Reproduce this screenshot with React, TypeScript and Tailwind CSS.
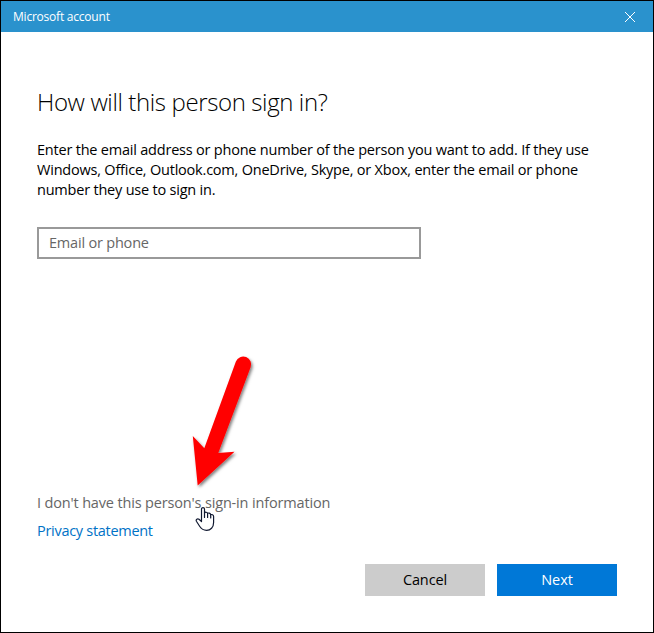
import { useState } from "react"

function CloseIcon() {
  return (
    <svg className="w-[10px] h-[10px]" viewBox="0 0 10 10" fill="none" stroke="white" strokeWidth="1">
      <path d="M0 0L10 10M10 0L0 10" />
    </svg>
  )
}

function RedArrow() {
  return (
    <svg
      className="absolute left-[179px] top-[344px] w-[90px] h-[155px] pointer-events-none"
      viewBox="180 345 90 155"
    >
      <defs>
        <filter id="arrow-shadow" x="-20%" y="-20%" width="150%" height="150%">
          <feDropShadow dx="1.5" dy="2" stdDeviation="1.7" floodColor="#000" floodOpacity="0.5" />
        </filter>
      </defs>
      <path
        d="M235.9 361.5A7.7 7.7 0 0 1 250.6 367.3L218.3 453L234.5 451.7L197.7 485.5L192.8 436L204.3 448.2Z"
        fill="#ff0000"
        filter="url(#arrow-shadow)"
      />
    </svg>
  )
}

function HandCursor() {
  return (
    <svg
      className="absolute left-[194px] top-[505px] w-[20px] h-[26px] pointer-events-none"
      viewBox="0 0 20 26"
      fill="white"
      stroke="#101830"
      strokeWidth="1.2"
      strokeLinejoin="round"
      strokeLinecap="round"
    >
      <path d="M6.5 15.5V3C6.5 1.1 9.5 1.1 9.5 3V6.8C10.2 5.9 12.3 6 12.6 7.4C13.4 6.6 15.4 7 15.7 8.8C16.8 8.1 18.6 8.8 18.6 10.6V16.5C18.6 21.5 15.5 24.3 11.6 24.3C8.2 24.3 6.4 23 4.8 20.5L1.4 15.2C0.6 13.5 2.4 12.3 4 13.3Z" />
      <path d="M9.5 6.8V11.5M12.6 7.4V11.5M15.7 8.8V12" fill="none" />
    </svg>
  )
}

export default function App() {
  const [email, setEmail] = useState("")

  return (
    <div className="relative flex flex-col w-[654px] h-[633px] bg-white border border-black text-black font-['Open_Sans',sans-serif]">
      <header className="flex items-center justify-between h-[31px] pl-3 pr-[18px] bg-[#2a92cd] text-white">
        <span className="text-[12px] font-medium tracking-[-0.22px]">Microsoft account</span>
        <button aria-label="Close">
          <CloseIcon />
        </button>
      </header>

      <main className="flex flex-col flex-1 px-9">
        <h1 className="mt-[54px] text-[24px] leading-8 font-light tracking-[-0.38px] whitespace-nowrap">
          How will this person sign in?
        </h1>
        <p className="mt-[22px] text-[14.5px] leading-5 tracking-[-0.21px] whitespace-nowrap">
          Enter the email address or phone number of the person you want to add. If they use
          <br />
          Windows, Office, Outlook.com, OneDrive, Skype, or Xbox, enter the email or phone
          <br />
          number they use to sign in.
        </p>
        <input
          className="mt-[27px] w-[384px] h-8 px-[10px] pb-[2px] border-2 border-[#999999] text-[14.5px] tracking-[-0.2px] outline-none placeholder:text-[#666666]"
          placeholder="Email or phone"
          value={email}
          onChange={(e) => setEmail(e.target.value)}
        />

        <div className="flex flex-col items-start mt-auto text-[14.5px] leading-5">
          <a href="#" className="text-[#666666] tracking-[-0.16px]">
            I don't have this person's sign-in information
          </a>
          <a href="#" className="mt-2 text-[#0072c6] tracking-[-0.29px]">
            Privacy statement
          </a>
        </div>

        <div className="flex justify-end gap-3 mt-[23px] mb-9 text-[14.5px] tracking-[-0.1px]">
          <button className="w-[120px] h-8 bg-[#cccccc]">Cancel</button>
          <button className="w-[120px] h-8 bg-[#0078d7] text-white">Next</button>
        </div>
      </main>

      <RedArrow />
      <HandCursor />
    </div>
  )
}
